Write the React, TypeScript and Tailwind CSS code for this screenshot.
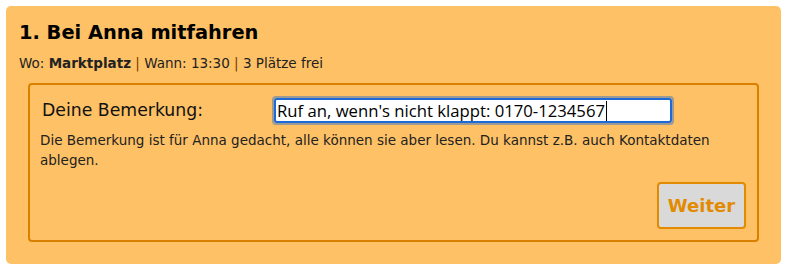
import React from "react";

export default function App() {
  return (
    <div className="w-[789px] h-[270px] bg-white pt-[6px] pl-[6px]" style={{ fontFamily: '"DejaVu Sans", Verdana, sans-serif' }}>
      <div className="w-[775px] h-[258px] bg-[#fec165] rounded-[5px] pt-[15px] px-[13px]">
        <h1 className="text-[19.4px] leading-[24px] font-bold text-black">1. Bei Anna mitfahren</h1>
        <div className="mt-[10px] text-[13.5px] leading-[16px] text-[#222]">
          Wo: <b>Marktplatz</b> <span className="text-[#7a3b00]">|</span> Wann: 13:30 <span className="text-[#7a3b00]">|</span> 3 Plätze frei
        </div>
        <div className="mt-[12px] ml-[9px] w-[731px] h-[159px] border-2 border-[#d98000] rounded-[4px] pt-[11px] pl-[12px] pr-[12px] flex flex-col">
          <div className="flex items-center">
            <div className="w-[230px] text-[17.3px] text-[#111]">Deine Bemerkung:</div>
            <div className="w-[402px] h-[29px] rounded-[4px] border-2 border-[#9c9a94] p-0">
              <div className="w-full h-full rounded-[3px] border-2 border-[#1d69d6] bg-white flex items-center pl-[1px] text-[16.7px] text-black" style={{ fontFamily: '"Open Sans", sans-serif' }}>
                <span>Ruf an, wenn's nicht klappt: 0170-1234567</span>
                <span className="inline-block w-[1px] h-[20px] bg-black ml-[1px]"></span>
              </div>
            </div>
          </div>
          <div className="mt-[5px] text-[13.5px] leading-[20px] text-[#222] -ml-[2px] w-[700px]">
            Die Bemerkung ist für Anna gedacht, alle können sie aber lesen. Du kannst z.B. auch Kontaktdaten ablegen.
          </div>
          <div className="flex justify-end mt-[12px] -mr-[1px]">
            <button className="w-[89px] h-[47px] bg-[#d9d9d9] border-2 border-[#e38b00] rounded-[4px] text-[#e38b00] font-bold text-[18px]">Weiter</button>
          </div>
        </div>
      </div>
    </div>
  );
}
